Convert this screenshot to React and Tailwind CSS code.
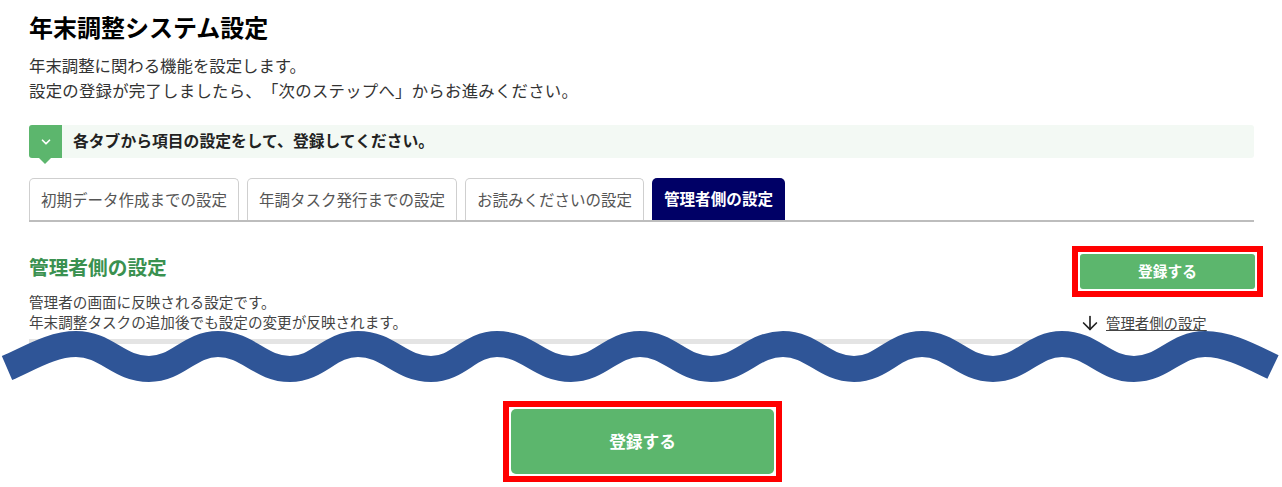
import React from "react";
import { ArrowDown, ChevronDown } from "lucide-react";

const tabs = [
  { label: "初期データ作成までの設定", width: "w-[210px]" },
  { label: "年調タスク発行までの設定", width: "w-[210px]" },
  { label: "お読みくださいの設定", width: "w-[179px]" },
];

// wave extremes, x/y of the centre line
const wavePoints = [
  [76, 344], [149, 369], [218, 344], [290, 369], [358, 344], [431, 369], [497, 344],
  [571, 369], [640, 344], [711, 369], [783, 344], [854, 369], [922, 344], [993, 369], [1062, 344],
  [1134, 369], [1205, 344],
];

const wavePath = wavePoints.reduce((d, [x, y], i) => {
  if (i === 0) return `${d} 76 344`;
  const [px, py] = wavePoints[i - 1];
  const handle = (x - px) * 0.42;
  return `${d} C${px + handle} ${py} ${x - handle} ${y} ${x} ${y}`;
}, "M7 368 C30 358 52 344");

const App = () => {
  return (
    <div className="relative w-[1282px] h-[487px] overflow-hidden bg-white text-[#333] [text-spacing-trim:space-all] font-['Noto_Sans_CJK_JP','Noto_Sans',sans-serif]">
      <div className="pl-[29px] pr-[28px] pt-[12px]">
        <h1 className="text-[24px] leading-[30px] font-bold text-black">年末調整システム設定</h1>
        <p className="mt-[11px] text-[16.4px] leading-[25px]">
          年末調整に関わる機能を設定します。
          <br />
          <span className="tracking-[0.25px]">設定の登録が完了しましたら、「次のステップへ」からお進みください。</span>
        </p>

        {/* banner */}
        <div className="mt-[22px] flex items-center h-[33px] bg-[#f3f9f4] rounded-[3px]">
          <div className="relative flex items-center justify-center w-[33px] h-[33px] bg-[#5cb66d] rounded-l-[3px]">
            <ChevronDown size={14} strokeWidth={3} className="text-white" />
            <div className="absolute left-[10px] top-[33px] border-x-[6px] border-t-[6px] border-x-transparent border-t-[#5cb66d]" />
          </div>
          <div className="ml-[11px] -mt-[2px] text-[15.8px] font-bold text-[#222]">各タブから項目の設定をして、登録してください。</div>
        </div>

        {/* tabs */}
        <div className="mt-[20px] flex gap-[8px] border-b-2 border-[#bdbdbd]">
          {tabs.map((tab) => (
            <div
              key={tab.label}
              className={`${tab.width} h-[42px] flex items-center justify-center border border-b-0 border-[#cfcfcf] rounded-t-[5px] text-[15.5px] text-[#555]`}
            >
              {tab.label}
            </div>
          ))}
          <div className="w-[133px] h-[42px] flex items-center justify-center bg-[#000066] rounded-t-[5px] text-[15.6px] font-bold text-white">
            管理者側の設定
          </div>
        </div>

        {/* section */}
        <div className="flex">
          <div className="w-[1011px] shrink-0">
            <h2 className="mt-[30px] text-[19.7px] leading-[30px] font-bold text-[#3a9150]">管理者側の設定</h2>
            <p className="mt-[10px] text-[14.6px] leading-[20px] text-[#444]">
              管理者の画面に反映される設定です。
              <br />
              年末調整タスクの追加後でも設定の変更が反映されます。
            </p>
            <div className="mt-[7px] h-[5px] bg-[#e4e4e4]" />
          </div>
          <div className="ml-[32px] mt-[24px] flex flex-col shrink-0">
            <div className="w-[191px] h-[51px] p-[2px] border-[6px] border-[#ff0000]">
              <button className="w-full h-full bg-[#5cb66d] rounded-[3px] text-[14.7px] font-bold text-white">
                登録する
              </button>
            </div>
            <div className="mt-[16px] ml-[7px] flex items-center h-[20px]">
              <ArrowDown size={22} strokeWidth={1.8} className="text-[#222]" />
              <a className="ml-[5px] text-[14.4px] leading-[20px] underline text-[#444]">管理者側の設定</a>
            </div>
          </div>
        </div>

        {/* bottom button */}
        <div className="mt-[57px] flex justify-center pl-[2px]">
          <div className="w-[279px] h-[81px] p-[2px] border-[6px] border-[#ff0000]">
            <button className="w-full h-full bg-[#5cb66d] rounded-[5px] text-[16.7px] font-bold text-white">
              登録する
            </button>
          </div>
        </div>
      </div>

      {/* wave cut mark over the page */}
      <svg className="absolute left-0 top-0 pointer-events-none" width="1282" height="487" viewBox="0 0 1282 487" fill="none">
        <path d={`${wavePath} C1228 344 1250 356 1273 367`} stroke="#2f5597" strokeWidth="26" />
      </svg>
    </div>
  );
};

export default App;
